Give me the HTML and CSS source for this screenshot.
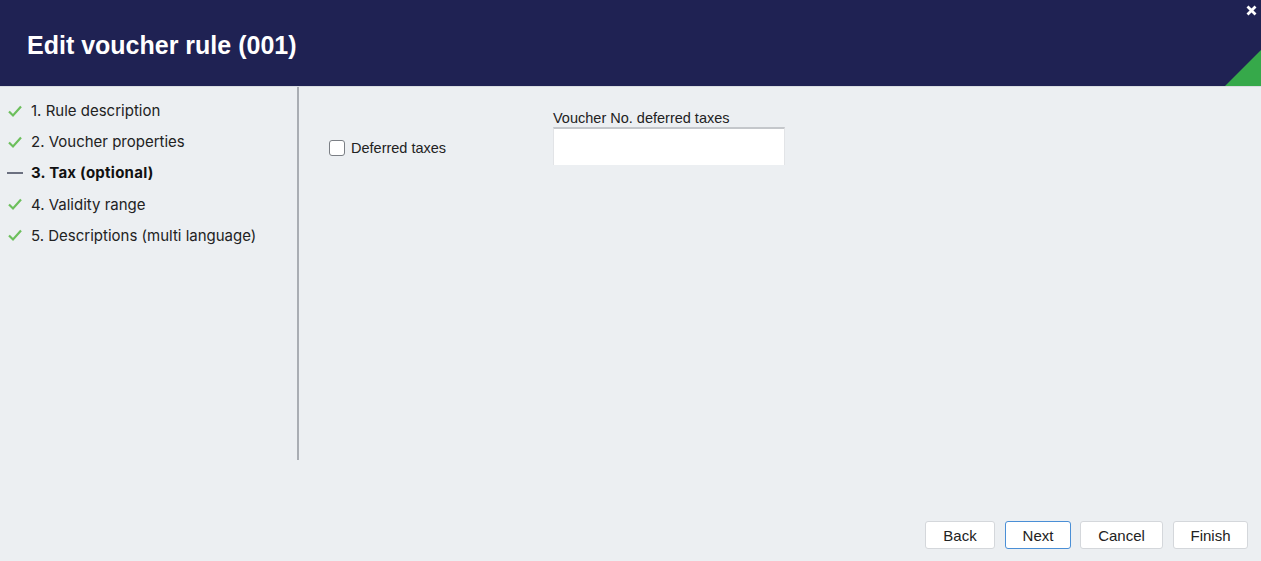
FILE: index.html
```html
<!DOCTYPE html>
<html>
<head>
<meta charset="utf-8">
<link rel="stylesheet" href="styles.css">
</head>
<body>
<div class="dialog">
  <header class="header">
    <h1 class="title">Edit voucher rule (001)</h1>
    <svg class="close" viewBox="0 0 11 11"><path d="M1.5 1.5l8 8M9.5 1.5l-8 8" stroke="#fff" stroke-width="2.8"/></svg>
    <span class="corner"></span>
  </header>
  <div class="main">
    <nav class="steps">
      <div class="step"><svg class="ico" viewBox="0 0 16 16"><path d="M2 8.5l4 4 8-9" fill="none" stroke="#6cbf5c" stroke-width="2.2"/></svg><span>1. Rule description</span></div>
      <div class="step"><svg class="ico" viewBox="0 0 16 16"><path d="M2 8.5l4 4 8-9" fill="none" stroke="#6cbf5c" stroke-width="2.2"/></svg><span>2. Voucher properties</span></div>
      <div class="step current"><svg class="ico" viewBox="0 0 16 16"><path d="M0 8h16" stroke="#6b7080" stroke-width="2"/></svg><span>3. Tax (optional)</span></div>
      <div class="step"><svg class="ico" viewBox="0 0 16 16"><path d="M2 8.5l4 4 8-9" fill="none" stroke="#6cbf5c" stroke-width="2.2"/></svg><span>4. Validity range</span></div>
      <div class="step"><svg class="ico" viewBox="0 0 16 16"><path d="M2 8.5l4 4 8-9" fill="none" stroke="#6cbf5c" stroke-width="2.2"/></svg><span>5. Descriptions (multi language)</span></div>
    </nav>
    <section class="content">
      <label class="check"><span class="box"></span><span>Deferred taxes</span></label>
      <div class="field">
        <div class="flabel">Voucher No. deferred taxes</div>
        <div class="input"></div>
      </div>
    </section>
  </div>
  <footer class="footer">
    <button class="btn">Back</button>
    <button class="btn primary">Next</button>
    <button class="btn">Cancel</button>
    <button class="btn">Finish</button>
  </footer>
</div>
</body>
</html>
```
FILE: styles.css
```css
html, body { margin: 0; padding: 0; }
body { background: #eceff2; width: 1261px; height: 561px; overflow: hidden; font-family: "Liberation Sans", Arial, sans-serif; }
.dialog { display: flex; flex-direction: column; height: 561px; }
.header { position: relative; height: 87px; background: #1f2253; display: flex; align-items: center; padding-left: 27px; box-sizing: border-box; border-bottom: 1px solid #d9dde2; }
.title { margin: 0; color: #fff; font-size: 25px; font-weight: bold; font-family: "Liberation Sans", Arial, sans-serif; padding-top: 4px; }
.close { position: absolute; right: 4px; top: 5px; width: 11px; height: 11px; }
.corner { position: absolute; right: 0; bottom: 0; width: 0; height: 0; border-style: solid; border-width: 0 0 36px 36px; border-color: transparent transparent #36a94a transparent; }
.main { display: flex; height: 373px; }
.steps { width: 297px; border-right: 2px solid #a9adb3; padding-top: 8px; box-sizing: content-box; }
.step { display: flex; align-items: center; height: 31.2px; font-family: Inter, "Noto Sans", sans-serif; font-size: 15px; color: #222; padding-left: 7px; }
.step .ico { width: 16px; height: 16px; margin-right: 8px; }
.step.current { font-weight: 700; color: #111; letter-spacing: 0.25px; }
.content { flex: 1; display: flex; align-items: flex-start; padding-left: 30px; padding-top: 22px; }
.check { display: flex; align-items: center; margin-top: 31px; font-size: 14.5px; color: #222; width: 224px; }
.box { width: 16px; height: 16px; border: 1px solid #7b7f85; border-radius: 3px; background: #fff; margin-right: 6px; box-sizing: border-box; }
.field { display: flex; flex-direction: column; }
.flabel { font-size: 14.5px; color: #222; height: 17px; line-height: 17px; padding-top: 1px; }
.input { width: 232px; height: 38px; background: #fff; border-top: 2px solid #c4c7cb; border-left: 1px solid #e2e4e7; border-right: 1px solid #e2e4e7; box-sizing: border-box; }
.footer { flex: 1; display: flex; justify-content: flex-end; align-items: flex-start; padding-top: 61px; padding-right: 13px; gap: 10px; }
.btn { height: 28px; background: #fff; border: 1px solid #d4d7db; border-radius: 3px; font-family: "Liberation Sans", Arial, sans-serif; font-size: 15px; color: #222; padding: 0; }
.btn:nth-child(1) { width: 70px; }
.btn:nth-child(2) { width: 66px; margin-right: -1px; }
.btn:nth-child(3) { width: 83px; }
.btn:nth-child(4) { width: 75px; }
.btn.primary { border-color: #4a8fd6; }
```
